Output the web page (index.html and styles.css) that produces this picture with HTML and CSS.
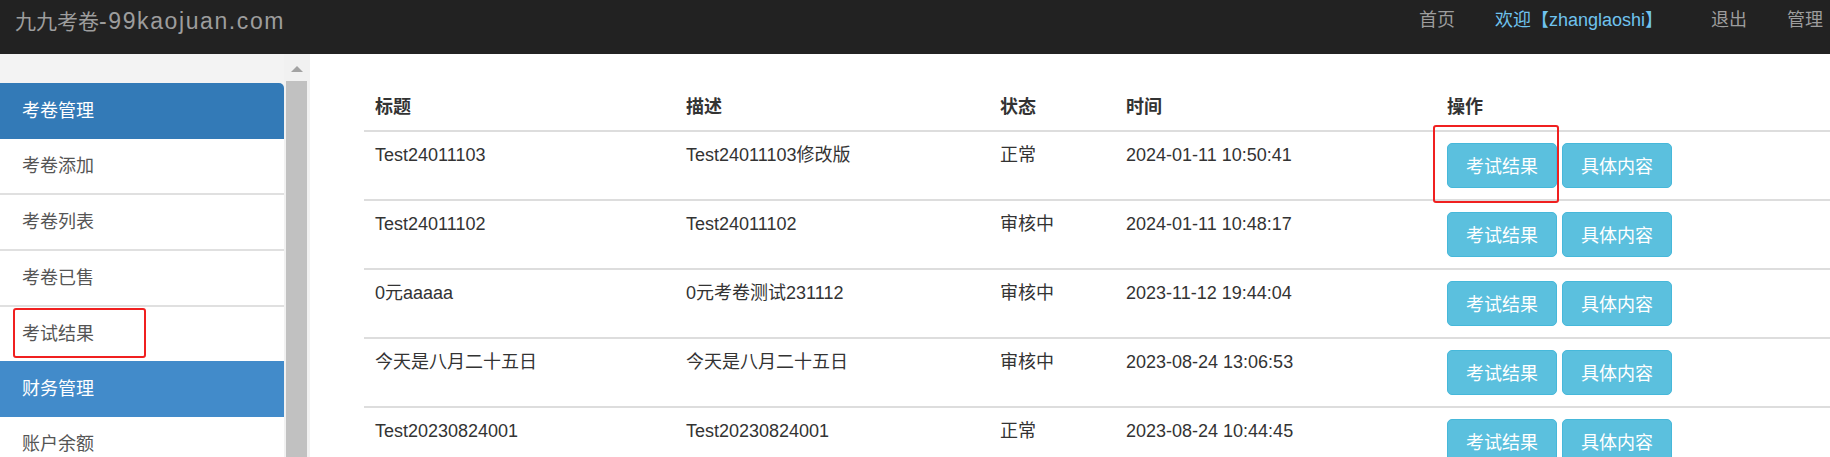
FILE: index.html
```html
<!DOCTYPE html>
<html lang="zh-CN">
<head>
  <meta charset="UTF-8">
  <title>九九考卷 - 考试结果</title>
  <link rel="stylesheet" href="styles.css">
</head>
<body>
  <header class="navbar">
    <a class="brand" href="#">九九考卷<span class="brand-domain">-99kaojuan.com</span></a>
    <ul class="nav">
      <li><a href="#">首页</a></li>
      <li class="welcome"><a href="#">欢迎【zhanglaoshi】</a></li>
      <li><a href="#">退出</a></li>
      <li><a href="#">管理</a></li>
    </ul>
  </header>

  <div class="layout">
    <aside class="sidebar">
      <div class="menu">
        <div class="menu-group">
          <div class="menu-heading first">考卷管理</div>
          <a class="menu-item" href="#">考卷添加</a>
          <a class="menu-item" href="#">考卷列表</a>
          <a class="menu-item" href="#">考卷已售</a>
          <a class="menu-item marked" href="#">考试结果<span class="red-box side-box"></span></a>
        </div>
        <div class="menu-group">
          <div class="menu-heading alt">财务管理</div>
          <a class="menu-item" href="#">账户余额</a>
        </div>
      </div>
      <div class="scrollbar">
        <span class="scroll-arrow"></span>
        <span class="scroll-thumb"></span>
      </div>
    </aside>

    <main class="content">
      <table class="table">
        <thead>
          <tr>
            <th class="col-title">标题</th>
            <th class="col-desc">描述</th>
            <th class="col-status">状态</th>
            <th class="col-time">时间</th>
            <th>操作</th>
          </tr>
        </thead>
        <tbody>
          <tr>
            <td>Test24011103</td>
            <td>Test24011103修改版</td>
            <td>正常</td>
            <td>2024-01-11 10:50:41</td>
            <td>
              <div class="ops marked">
                <button class="btn">考试结果</button>
                <button class="btn">具体内容</button>
                <span class="red-box table-box"></span>
              </div>
            </td>
          </tr>
          <tr>
            <td>Test24011102</td>
            <td>Test24011102</td>
            <td>审核中</td>
            <td>2024-01-11 10:48:17</td>
            <td>
              <div class="ops">
                <button class="btn">考试结果</button>
                <button class="btn">具体内容</button>
              </div>
            </td>
          </tr>
          <tr>
            <td>0元aaaaa</td>
            <td>0元考卷测试231112</td>
            <td>审核中</td>
            <td>2023-11-12 19:44:04</td>
            <td>
              <div class="ops">
                <button class="btn">考试结果</button>
                <button class="btn">具体内容</button>
              </div>
            </td>
          </tr>
          <tr>
            <td>今天是八月二十五日</td>
            <td>今天是八月二十五日</td>
            <td>审核中</td>
            <td>2023-08-24 13:06:53</td>
            <td>
              <div class="ops">
                <button class="btn">考试结果</button>
                <button class="btn">具体内容</button>
              </div>
            </td>
          </tr>
          <tr>
            <td>Test20230824001</td>
            <td>Test20230824001</td>
            <td>正常</td>
            <td>2023-08-24 10:44:45</td>
            <td>
              <div class="ops">
                <button class="btn">考试结果</button>
                <button class="btn">具体内容</button>
              </div>
            </td>
          </tr>
        </tbody>
      </table>
    </main>
  </div>
</body>
</html>
```

FILE: styles.css
```css
body {
  margin: 0;
  overflow: hidden;
  font-family: "Liberation Sans", Arial, "Noto Sans CJK SC", sans-serif;
  font-size: 18px;
  color: #333;
  background-color: #fff;
}

a {
  text-decoration: none;
}

/* top bar */
.navbar {
  display: flex;
  height: 54px;
  background-color: #222;
  overflow: hidden;
}

.brand {
  padding-left: 15px;
  font-size: 21px;
  line-height: 42px;
  color: #9d9d9d;
  white-space: nowrap;
}

.brand-domain {
  font-size: 23px;
  letter-spacing: 1.6px;
}

.nav {
  display: flex;
  margin: 0 -13px 0 auto;
  padding: 0;
  list-style: none;
}

.nav a {
  display: block;
  padding: 0 20px;
  line-height: 40px;
  color: #9d9d9d;
  white-space: nowrap;
}

.nav .welcome a {
  padding-right: 28px;
  color: #6fc3ee;
}

/* sidebar */
.layout {
  display: flex;
  height: calc(100vh - 54px);
  overflow: hidden;
}

.sidebar {
  display: flex;
  flex-shrink: 0;
  width: 310px;
  background-color: #f1f1f1;
}

.menu {
  width: 284px;
  padding-top: 29px;
  background-color: #f3f3f3;
}

.menu-heading {
  padding-left: 22px;
  line-height: 56px;
  color: #fff;
  background-color: #337ab7;
}

.menu-heading.first {
  border-top-right-radius: 5px;
}

.menu-heading.alt {
  background-color: #428bca;
}

.menu-item {
  display: block;
  padding-left: 22px;
  line-height: 54px;
  color: #555;
  background-color: #fff;
}

.menu-item + .menu-item {
  border-top: 2px solid #e0e0e0;
}

.scrollbar {
  display: flex;
  flex-direction: column;
  width: 26px;
  padding: 0 3px 0 2px;
  box-sizing: border-box;
}

.scroll-arrow {
  width: 0;
  height: 0;
  margin: 12px auto 9px;
  border-left: 6px solid transparent;
  border-right: 6px solid transparent;
  border-bottom: 6px solid #a3a3a3;
}

.scroll-thumb {
  flex: 1;
  background-color: #c1c1c1;
}

/* exam list */
.content {
  flex: 1;
  padding: 30px 0 0 54px;
}

.table {
  width: 1466px;
  border-collapse: separate;
  border-spacing: 0;
  table-layout: fixed;
  line-height: 1.42857;
}

.table th {
  padding: 11px 11px 9px;
  text-align: left;
  font-weight: bold;
  border-bottom: 2px solid #ddd;
}

.table td {
  padding: 11px;
  vertical-align: top;
  white-space: nowrap;
  border-bottom: 2px solid #ddd;
}

.col-title { width: 289px; }
.col-desc { width: 292px; }
.col-status { width: 104px; }
.col-time { width: 299px; }

.ops {
  display: flex;
  gap: 5px;
}

.btn {
  width: 110px;
  height: 45px;
  padding: 0;
  font-family: inherit;
  font-size: 18px;
  color: #fff;
  background-color: #5bc0de;
  border: 1px solid #46b8da;
  border-radius: 5px;
}

/* red annotation boxes */
.marked {
  position: relative;
}

.red-box {
  position: absolute;
  box-sizing: border-box;
  border: 2px solid #f02020;
  border-radius: 3px;
}

.side-box {
  top: 1px;
  left: 13px;
  width: 133px;
  height: 50px;
}

.table-box {
  top: -18px;
  left: -14px;
  width: 126px;
  height: 78px;
}
```
